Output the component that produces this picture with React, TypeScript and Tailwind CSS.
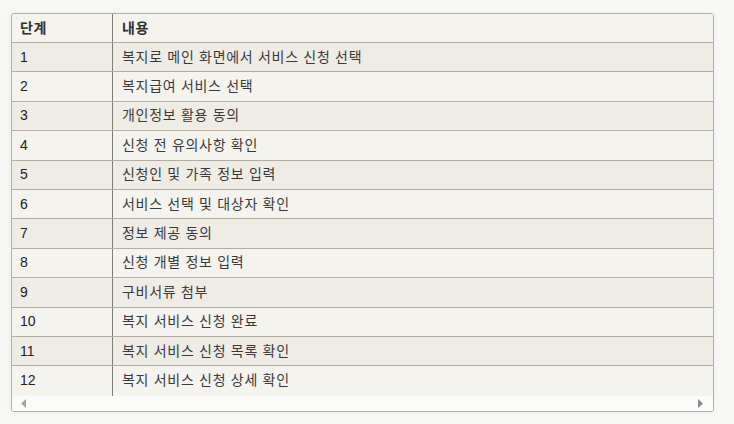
import React from 'react';

const rows: [string, string][] = [
  ['1', '복지로 메인 화면에서 서비스 신청 선택'],
  ['2', '복지급여 서비스 선택'],
  ['3', '개인정보 활용 동의'],
  ['4', '신청 전 유의사항 확인'],
  ['5', '신청인 및 가족 정보 입력'],
  ['6', '서비스 선택 및 대상자 확인'],
  ['7', '정보 제공 동의'],
  ['8', '신청 개별 정보 입력'],
  ['9', '구비서류 첨부'],
  ['10', '복지 서비스 신청 완료'],
  ['11', '복지 서비스 신청 목록 확인'],
  ['12', '복지 서비스 신청 상세 확인'],
];

const App: React.FC = () => {
  return (
    <div
      className="w-[734px] h-[424px] bg-[#f8f8f6] pt-[13px] pl-[11px] text-[#2f2f2f]"
      style={{ fontFamily: '"Liberation Sans", "Noto Sans CJK KR", sans-serif' }}
    >
      <div className="w-[703px] border border-[#b3b0a3] rounded-[3px] overflow-hidden shadow-[0_0_6px_rgba(0,0,0,0.06)] bg-[#f4f3ee]">
        {/* header */}
        <div className="flex h-[29px] border-b border-[#b3b0a3] text-[14px] font-bold bg-[#f4f3ee]">
          <div className="w-[101px] border-r border-[#7f7d74] px-2 flex items-center tracking-[0.5px]">단계</div>
          <div className="flex-1 pl-[9px] flex items-center tracking-[0.5px]">내용</div>
        </div>

        {/* body */}
        {rows.map(([n, t], i) => (
          <div
            key={n}
            className={`flex h-[29.4px] text-[14px] ${i < rows.length - 1 ? 'border-b border-[#b3b0a3]' : ''} ${i % 2 === 0 ? 'bg-[#efece6]' : 'bg-[#f4f3ee]'}`}
          >
            <div className="w-[101px] border-r border-[#7f7d74] px-2 flex items-center text-[#222]">{n}</div>
            <div className="flex-1 pl-[9px] flex items-center text-[#3a3a3a] tracking-[0.7px]">{t}</div>
          </div>
        ))}

        {/* horizontal scrollbar */}
        <div className="h-[15px] bg-[#fbfbfa] flex items-center justify-between pl-[9px] pr-[10px]">
          <svg width="5" height="9" viewBox="0 0 5 9">
            <path d="M5 0 L0 4.5 L5 9 Z" fill="#a3a3a3" />
          </svg>
          <svg width="5" height="9" viewBox="0 0 5 9">
            <path d="M0 0 L5 4.5 L0 9 Z" fill="#8a8a8a" />
          </svg>
        </div>
      </div>
    </div>
  );
};

export default App;
